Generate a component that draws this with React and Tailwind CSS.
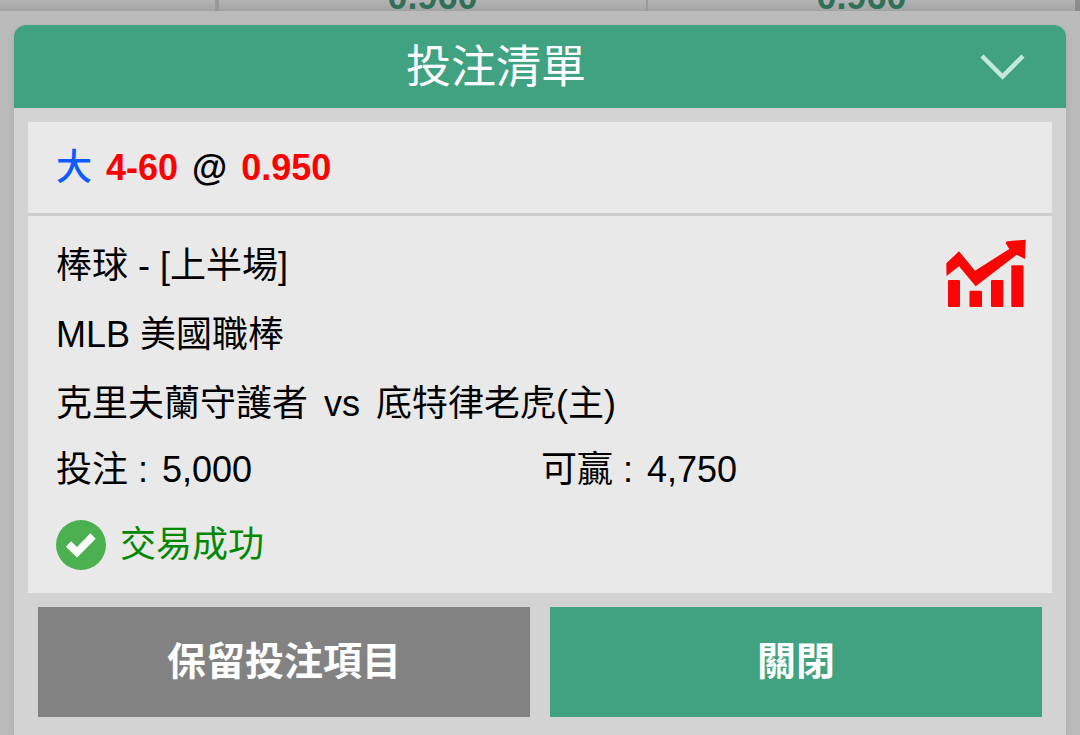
const ODDS = ['0.960', '0.960'];

function TrendIcon() {
  return (
    <svg viewBox="0 0 80 69" className="h-[69px] w-20" fill="#fb0404" aria-hidden="true">
      <path d="M0.3 24.3 L13 12.3 L29 31.7 L63.3 10 L59.8 4.5 Q59.6 2.6 61.5 2.2 L79.7 0.7 L79 20 L70.7 15.7 L29.7 47.3 L13 27.3 L0.5 37 Z" />
      <rect x="2" y="41" width="12" height="27" rx="1" />
      <rect x="23.5" y="51.7" width="12.5" height="16.3" rx="1" />
      <rect x="45" y="41" width="12.3" height="27" rx="1" />
      <rect x="65.3" y="26.2" width="12.2" height="41.8" rx="1" />
    </svg>
  );
}

function SuccessIcon() {
  return (
    <svg viewBox="0 0 50 50" className="h-[50px] w-[50px] shrink-0" aria-hidden="true">
      <circle cx="25" cy="25" r="25" fill="#4bb04f" />
      <path d="M12.5 24 L21 32.3 L37 16" fill="none" stroke="#fff" strokeWidth="7.5" />
    </svg>
  );
}

function Amount({ label, value }) {
  return (
    <div className="flex gap-3.5">
      <dt>{label} :</dt>
      <dd>{value}</dd>
    </div>
  );
}

export default function App() {
  return (
    <div
      lang="zh-Hant"
      className="flex min-h-screen flex-col bg-[#bbbbbb] text-4xl text-black"
      style={{ fontFamily: '"Liberation Sans", "Noto Sans CJK TC", sans-serif' }}
    >
      <div className="flex h-[11px] items-end overflow-hidden border-r-[5px] border-[#8c8c8c] bg-linear-to-b from-[#b4b4b4] to-[#a3a3a3] font-bold text-[#2f7058]">
        <div className="w-1/5" />
        {ODDS.map((odd, i) => (
          <div
            key={i}
            className="flex h-[11px] flex-1 items-end justify-center border-l-4 border-[#999999] leading-7 last:border-l-2"
          >
            <span>{odd}</span>
          </div>
        ))}
      </div>

      <main className="flex flex-1 flex-col px-3.5 pt-3.5">
        <div className="flex flex-1 flex-col rounded-t-xl shadow-[0_4px_8px_rgba(0,0,0,0.1)]">
          <header className="flex h-[83px] items-center rounded-t-xl bg-[#40a280] pr-10 text-white">
            <h1 className="flex-1 pt-0.5 text-center text-[45px] leading-none">投注清單</h1>
            <button type="button" aria-label="收合" className="flex h-12 w-12 items-center justify-center">
              <svg viewBox="0 0 48 48" className="h-12 w-12" fill="none" stroke="#c4e9dc" strokeWidth="4.5">
                <path d="M4 13 L24.5 33.5 L45 13" />
              </svg>
            </button>
          </header>

          <section className="flex-1 bg-[#d3d3d3] p-3.5">
            <article className="bg-[#e9e9e9]">
              <h2 className="flex h-[94px] items-center gap-3.5 border-b-[3px] border-[#cccccc] px-7 font-bold leading-none text-[#ff0000]">
                <span className="font-medium text-[#0a5cff]">大</span>
                <span>4-60</span>
                <span className="text-black">@</span>
                <span>0.950</span>
              </h2>

              <div className="pt-[15px] pr-[26px] pb-[23px] pl-7">
                <div className="flex items-start justify-between">
                  <div className="leading-[69px]">
                    <p>棒球 - [上半場]</p>
                    <p>MLB 美國職棒</p>
                    <p className="flex gap-4">
                      <span>克里夫蘭守護者</span>
                      <span>vs</span>
                      <span>底特律老虎(主)</span>
                    </p>
                  </div>
                  <button type="button" aria-label="統計" className="mt-2">
                    <TrendIcon />
                  </button>
                </div>
                <dl className="grid grid-cols-2 leading-[64px]">
                  <Amount label="投注" value="5,000" />
                  <Amount label="可贏" value="4,750" />
                </dl>
                <p className="mt-[18px] flex items-center gap-3.5 leading-[50px] text-[#008800]">
                  <SuccessIcon />
                  <span>交易成功</span>
                </p>
              </div>
            </article>

            <div className="mt-3.5 grid grid-cols-2 gap-5 px-2.5 text-[39px] font-bold text-white">
              <button type="button" className="h-[110px] bg-[#828282]">
                保留投注項目
              </button>
              <button type="button" className="h-[110px] bg-[#40a280]">
                關閉
              </button>
            </div>
          </section>
        </div>
      </main>
    </div>
  );
}
